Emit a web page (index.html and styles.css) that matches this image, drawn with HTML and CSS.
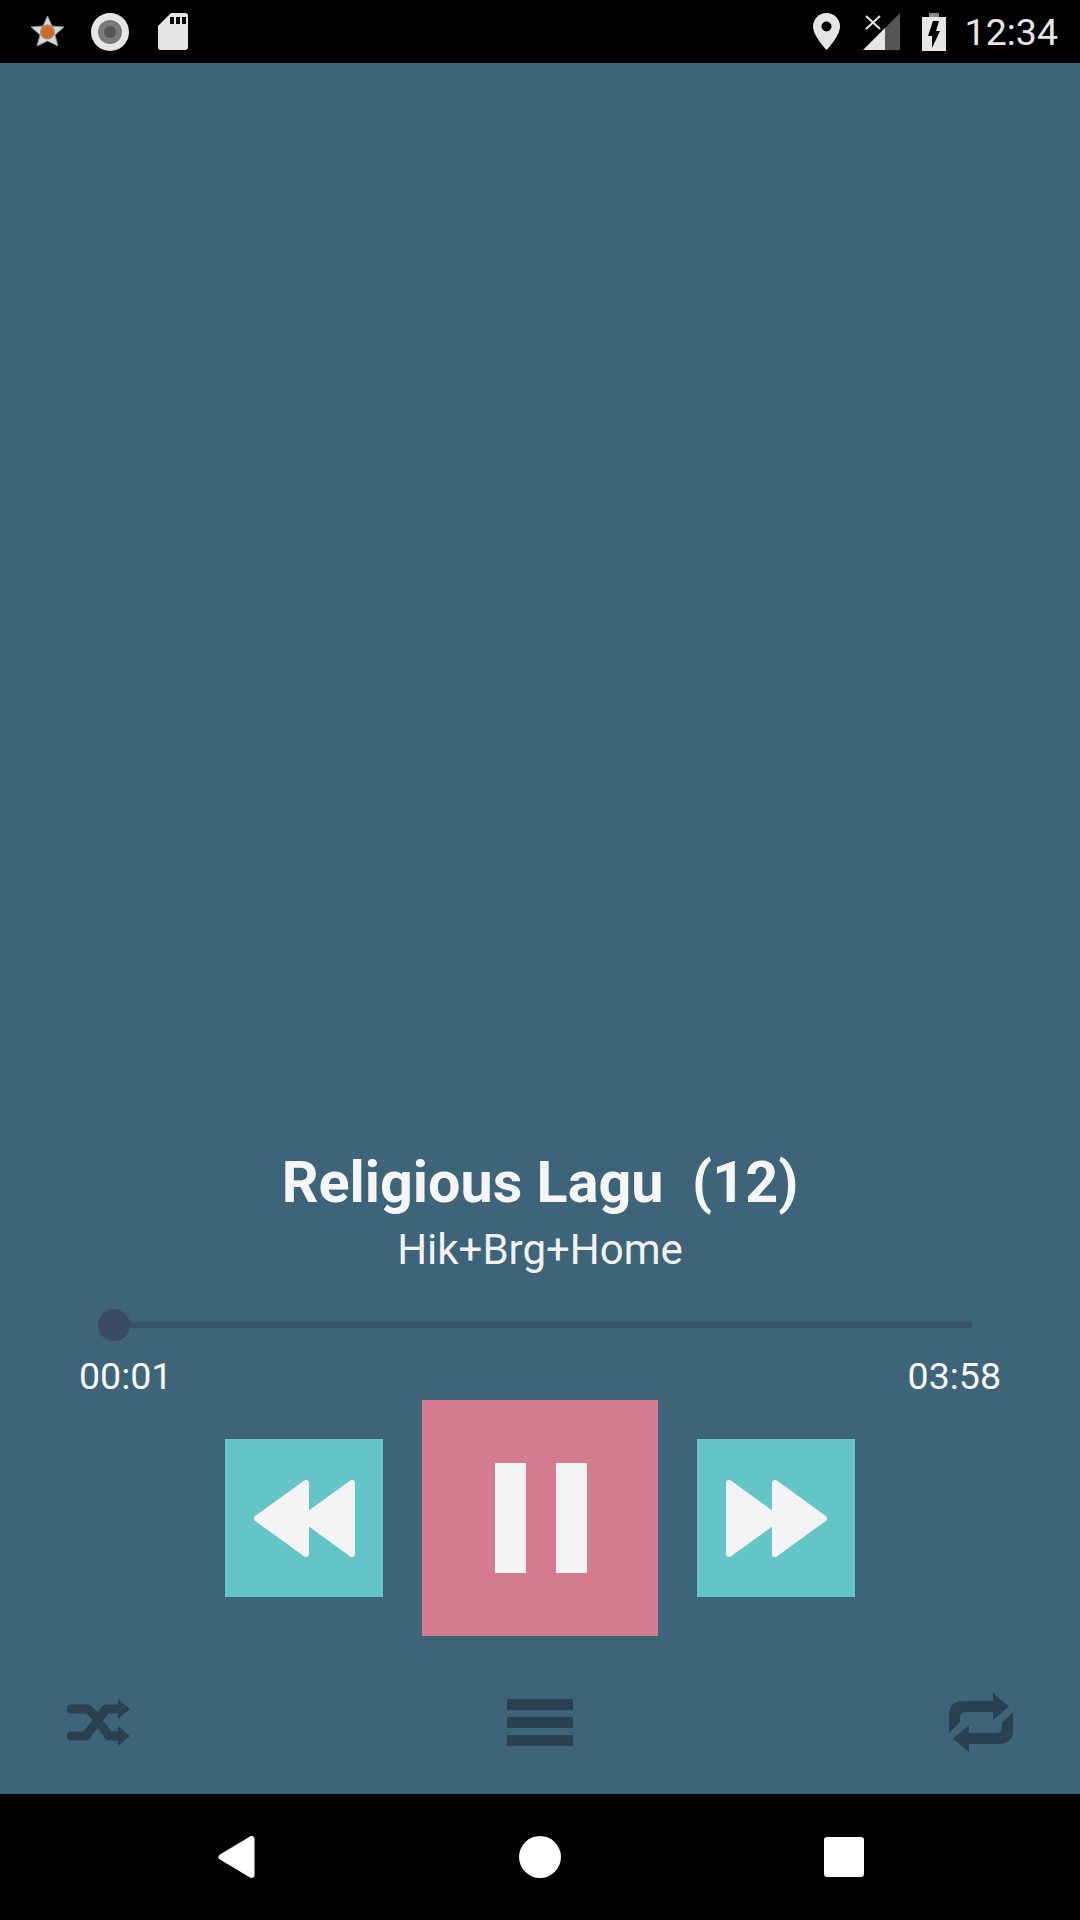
FILE: index.html
```html
<!DOCTYPE html>
<html lang="en">
<head>
    <meta charset="UTF-8">
    <meta name="viewport" content="width=device-width, initial-scale=1.0">
    <title>Player</title>
    <link rel="stylesheet" href="styles.css">
</head>
<body>
    <div class="screen">
        <!-- status bar -->
        <div class="status-bar">
            <div class="status-left">
                <svg class="icon-star" viewBox="0 0 35 32">
                    <path d="M17.5 1 L22 11 L34 12 L25 20 L28 31 L17.5 26 L7 31 L10 20 L1 12 L13 11 Z" fill="#d5d9dc" stroke="#8a8f92" stroke-width="1" stroke-linejoin="round"/>
                    <circle cx="17.5" cy="17" r="7.5" fill="#9a8b7c"/>
                    <circle cx="17.5" cy="17" r="5.5" fill="#e0640f"/>
                </svg>
                <svg class="icon-disc" viewBox="0 0 38 38">
                    <circle cx="19" cy="19" r="19" fill="#e6e6e6"/>
                    <circle cx="19" cy="19" r="12" fill="#7a7a7a"/>
                    <circle cx="19" cy="19" r="6" fill="#565656"/>
                </svg>
                <svg class="icon-sd" viewBox="0 0 30 37">
                    <path d="M13 0 H27 Q30 0 30 3 V34 Q30 37 27 37 H3 Q0 37 0 34 V13 Z" fill="#e6e6e6"/>
                    <path d="M12 4 H16 V11 H12 Z M18 4 H22 V11 H18 Z M24 4 H28 V11 H24 Z" fill="#000"/>
                </svg>
            </div>
            <div class="status-right">
                <svg class="icon-pin" viewBox="0 0 27 37">
                    <path d="M13.5 0 C6 0 0 6 0 13.5 C0 23 13.5 37 13.5 37 C13.5 37 27 23 27 13.5 C27 6 21 0 13.5 0 Z" fill="#e6e6e6"/>
                    <circle cx="13.5" cy="13.5" r="5" fill="#000"/>
                </svg>
                <svg class="icon-signal" viewBox="0 0 37 37">
                    <path d="M37 0 V37 H22 V15 Z" fill="#555"/>
                    <path d="M0 37 L22 15 V37 Z" fill="#e6e6e6"/>
                    <path d="M3 3 L17 16 M17 3 L3 16" stroke="#e6e6e6" stroke-width="2" fill="none"/>
                </svg>
                <svg class="icon-battery" viewBox="0 0 24 38">
                    <path d="M7 0 H17 V4 H7 Z" fill="#8a8a8a"/>
                    <path d="M0 4 H24 V38 H0 Z" fill="#e6e6e6"/>
                    <path d="M11 8 H17 L14 18 H18 L10 35 V23 H6 Z" fill="#000"/>
                </svg>
                <span class="clock">12:34</span>
            </div>
        </div>

        <div class="player">
            <div class="song-title">Religious Lagu  (12)</div>
            <div class="song-album">Hik+Brg+Home</div>

            <div class="seek">
                <div class="seek-track"></div>
                <div class="seek-thumb"></div>
            </div>
            <div class="times">
                <span>00:01</span>
                <span>03:58</span>
            </div>

            <div class="controls">
                <div class="btn btn-side">
                    <svg class="icon-skip" viewBox="0 0 101 77">
                        <path d="M3 38.5 L52 3 V74 Z M49 38.5 L98 3 V74 Z" fill="#f4f4f4" stroke="#f4f4f4" stroke-width="6" stroke-linejoin="round"/>
                    </svg>
                </div>
                <div class="btn btn-main">
                    <div class="pause-bar"></div>
                    <div class="pause-bar"></div>
                </div>
                <div class="btn btn-side">
                    <svg class="icon-skip" viewBox="0 0 101 77">
                        <path d="M98 38.5 L49 3 V74 Z M52 38.5 L3 3 V74 Z" fill="#f4f4f4" stroke="#f4f4f4" stroke-width="6" stroke-linejoin="round"/>
                    </svg>
                </div>
            </div>

            <div class="bottom-row">
                <svg class="icon-shuffle" viewBox="0 0 63 47">
                    <path d="M4 10 H21 L28 17 M4 37 H19 L39 10 H53 M35 27 L42 37 H53" fill="none" stroke="#2b4050" stroke-width="9" stroke-linecap="round" stroke-linejoin="round"/>
                    <path d="M51 0 L63 10 L51 20 Z M51 27 L63 37 L51 47 Z" fill="#2b4050"/>
                </svg>
                <div class="list-icon">
                    <div class="list-line"></div>
                    <div class="list-line"></div>
                    <div class="list-line"></div>
                </div>
                <svg class="icon-repeat" viewBox="0 0 64 59">
                    <path d="M0 40 V22 Q0 8 15 8 H44 V0 L60 13.5 L44 27 V19 H17 Q11 19 11 25 V29 Z" fill="#2b4050"/>
                    <path d="M64 19 V37 Q64 51 49 51 H20 V59 L4 45.5 L20 32 V40 H47 Q53 40 53 34 V30 Z" fill="#2b4050"/>
                </svg>
            </div>
        </div>

        <!-- nav bar -->
        <div class="nav-bar">
            <svg class="nav-back" viewBox="0 0 37 42">
                <path d="M3.5 21 L33.5 3 V39 Z" fill="#fff" stroke="#fff" stroke-width="6" stroke-linejoin="round"/>
            </svg>
            <div class="nav-home"></div>
            <div class="nav-recent"></div>
        </div>
    </div>
</body>
</html>
```

FILE: styles.css
```css
* {
    box-sizing: border-box;
}
body {
    margin: 0;
    font-family: Roboto, "Noto Sans", sans-serif;
    color: #fff;
}
.screen {
    width: 1080px;
    height: 1920px;
    display: flex;
    flex-direction: column;
    background: #3d6478;
}

/* status bar */
.status-bar {
    height: 63px;
    background: #000;
    display: flex;
    justify-content: space-between;
    align-items: center;
    padding: 0 22px 0 30px;
}
.status-left,
.status-right {
    display: flex;
    align-items: center;
}
.status-left svg,
.status-right svg {
    filter: blur(0.4px);
}
.icon-star {
    width: 35px;
    height: 32px;
    margin-right: 26px;
    margin-bottom: 2px;
}
.icon-disc {
    width: 38px;
    height: 38px;
    margin-right: 29px;
}
.icon-sd {
    width: 30px;
    height: 37px;
}
.icon-pin {
    width: 27px;
    height: 37px;
    margin-right: 23px;
}
.icon-signal {
    width: 37px;
    height: 37px;
    margin-right: 22px;
}
.icon-battery {
    width: 24px;
    height: 38px;
    margin-right: 19px;
}
.clock {
    font-size: 37.5px;
    color: #e6e6e6;
    line-height: 42px;
}

/* player */
.player {
    flex: 1;
    display: flex;
    flex-direction: column;
    justify-content: flex-end;
    padding-bottom: 42px;
}
.song-title {
    font-size: 57.5px;
    font-weight: 700;
    line-height: 66px;
    text-align: center;
    white-space: pre;
    color: #f6f6f6;
    margin-bottom: 9px;
}
.song-album {
    font-size: 42px;
    line-height: 50px;
    text-align: center;
    color: #f2f2f2;
    margin-bottom: 34px;
}
.seek {
    position: relative;
    height: 32px;
    margin: 0 108px 14px 98px;
    display: flex;
    align-items: center;
}
.seek-track {
    height: 6px;
    margin-left: 16px;
    flex: 1;
    background: #365569;
}
.seek-thumb {
    position: absolute;
    left: 0;
    top: 0;
    width: 32px;
    height: 32px;
    border-radius: 50%;
    background: #3a4a63;
}
.times {
    display: flex;
    justify-content: space-between;
    padding: 0 79px;
    font-size: 37.5px;
    line-height: 42px;
    color: #f6f6f6;
    margin-bottom: 3px;
}
.controls {
    display: flex;
    justify-content: center;
    align-items: center;
    gap: 39px;
    margin-bottom: 57px;
}
.btn {
    display: flex;
    justify-content: center;
    align-items: center;
}
.btn-side {
    width: 158px;
    height: 158px;
    background: #63c5c7;
}
.icon-skip {
    width: 101px;
    height: 77px;
    filter: blur(0.6px);
}
.btn-main {
    width: 236px;
    height: 236px;
    background: #d57b8f;
    gap: 30px;
    padding-left: 2px;
}
.pause-bar {
    width: 31px;
    height: 110px;
    background: #f4f4f4;
}
.bottom-row {
    display: flex;
    justify-content: space-between;
    align-items: center;
    padding: 0 67px;
    height: 59px;
}
.icon-shuffle {
    width: 63px;
    height: 47px;
}
.icon-repeat {
    width: 64px;
    height: 59px;
}
.list-icon {
    width: 66px;
    display: flex;
    flex-direction: column;
    gap: 7px;
}
.list-line {
    height: 11px;
    background: #2b4050;
}

/* nav bar */
.nav-bar {
    height: 126px;
    background: #000;
    display: flex;
    justify-content: space-between;
    align-items: center;
    padding: 0 216px 0 218px;
}
.nav-back {
    width: 37px;
    height: 42px;
}
.nav-home {
    width: 42px;
    height: 42px;
    border-radius: 50%;
    background: #fff;
}
.nav-recent {
    width: 40px;
    height: 40px;
    border-radius: 3px;
    background: #fff;
}
```
